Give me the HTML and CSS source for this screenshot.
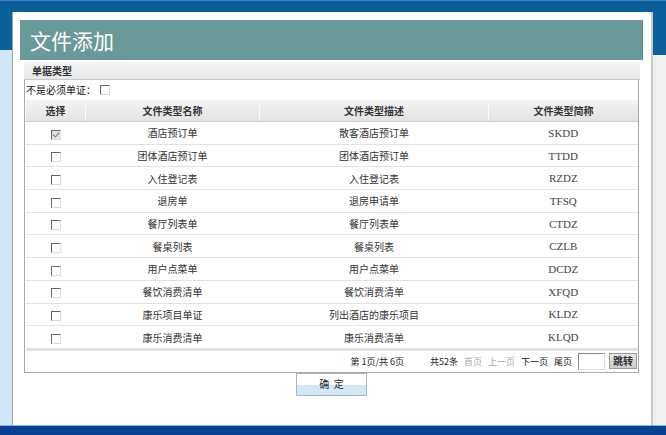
FILE: index.html
```html
<!DOCTYPE html>
<html>
<head>
  <meta charset="utf-8">
  <title>文件添加</title>
  <link rel="stylesheet" href="styles.css">
</head>
<body>

<div class="topbar"></div>

<div class="frame">
  <div class="side-left"></div>

  <div class="panel">
    <div class="title">文件添加</div>
    <div class="section">单据类型</div>

    <div class="box">
      <div class="must">不是必须单证： <span class="chk"></span></div>

      <table class="list">
        <tr class="head">
          <th class="c1">选择</th>
          <th class="c2">文件类型名称</th>
          <th class="c3">文件类型描述</th>
          <th class="c4">文件类型简称</th>
        </tr>
        <tr><td><span class="chk on"></span></td><td>酒店预订单</td><td>散客酒店预订单</td><td class="code">SKDD</td></tr>
        <tr><td><span class="chk"></span></td><td>团体酒店预订单</td><td>团体酒店预订单</td><td class="code">TTDD</td></tr>
        <tr><td><span class="chk"></span></td><td>入住登记表</td><td>入住登记表</td><td class="code">RZDZ</td></tr>
        <tr><td><span class="chk"></span></td><td>退房单</td><td>退房申请单</td><td class="code">TFSQ</td></tr>
        <tr><td><span class="chk"></span></td><td>餐厅列表单</td><td>餐厅列表单</td><td class="code">CTDZ</td></tr>
        <tr><td><span class="chk"></span></td><td>餐桌列表</td><td>餐桌列表</td><td class="code">CZLB</td></tr>
        <tr><td><span class="chk"></span></td><td>用户点菜单</td><td>用户点菜单</td><td class="code">DCDZ</td></tr>
        <tr><td><span class="chk"></span></td><td>餐饮消费清单</td><td>餐饮消费清单</td><td class="code">XFQD</td></tr>
        <tr><td><span class="chk"></span></td><td>康乐项目单证</td><td>列出酒店的康乐项目</td><td class="code">KLDZ</td></tr>
        <tr class="last"><td><span class="chk"></span></td><td>康乐消费清单</td><td>康乐消费清单</td><td class="code">KLQD</td></tr>
      </table>

      <div class="pager">
        <span class="count">第 1页/共 6页</span>
        <span>共52条</span>
        <span class="off">首页</span>
        <span class="off">上一页</span>
        <span>下一页</span>
        <span>尾页</span>
        <span class="goto"></span>
        <span class="jump">跳转</span>
      </div>
    </div>

    <div class="actions">
      <span class="ok">确&nbsp;&nbsp;定</span>
    </div>
  </div>

  <div class="side-right"></div>
</div>

<div class="bottombar"></div>

</body>
</html>
```

FILE: styles.css
```css
body {
  margin: 0;
  width: 666px;
  height: 435px;
  overflow: hidden;
  background-color: #eeeeee;
  font-family: "Noto Sans CJK SC", sans-serif;
  font-size: 10px;
  color: #222;
}

.topbar {
  height: 12px;
  background: linear-gradient(to right, #0a5f98 0%, #0a5f98 100%);
  border-top: 1px solid #3d7fc0;
  box-sizing: border-box;
}

.frame {
  display: flex;
  height: 413px;
}

.side-left {
  width: 12px;
  background: linear-gradient(to bottom, #0c5f98 0px, #0c5f98 38px, #cfe7f6 38px);
  border-right: 1px solid #9aa6b0;
}

.side-right {
  flex: 1;
  background: linear-gradient(to bottom, #0c5f98 0px, #0c5f98 43px, #f0f0f0 43px);
  border-left: 2px solid #c8c8c8;
}

.panel {
  width: 638px;
  background-color: white;
  border-radius: 7px 7px 0 0;
  padding: 8px 0 0 7px;
  box-sizing: border-box;
}

.title {
  width: 623px;
  height: 40px;
  background-color: #6a9999;
  border-right: 1px solid #5d8888;
  box-sizing: border-box;
  color: white;
  font-size: 21px;
  line-height: 40px;
  padding-left: 10px;
}

.section {
  margin: 2px 0 0 4px;
  width: 616px;
  height: 18px;
  background: linear-gradient(to bottom, #f6f6f6, #e6e6e6);
  border-bottom: 1px solid #c9c9c9;
  box-sizing: border-box;
  font-weight: bold;
  color: #333;
  line-height: 18px;
  padding-left: 8px;
}

.box {
  margin-left: 4px;
  width: 615px;
  border: 1px solid #aaaaaa;
  border-top: none;
  box-sizing: border-box;
}

.must {
  height: 20px;
  line-height: 20px;
  padding-left: 1px;
  color: #111;
  display: flex;
  align-items: center;
}

.chk {
  display: inline-block;
  width: 8px;
  height: 8px;
  border-top: 1px solid #666;
  border-left: 1px solid #666;
  border-right: 1px solid #ddd;
  border-bottom: 1px solid #ddd;
  background-color: #fff;
  vertical-align: middle;
}

.must .chk {
  margin-left: 4px;
}

.chk.on {
  background-color: #e4e4e4;
  position: relative;
}

.chk.on::after {
  content: "";
  position: absolute;
  left: 2px;
  top: 0px;
  width: 3px;
  height: 5px;
  border-right: 1px solid #777;
  border-bottom: 1px solid #777;
  transform: rotate(40deg);
}

.list {
  width: 613px;
  border-collapse: collapse;
  table-layout: fixed;
}

.list th {
  height: 21px;
  padding: 0;
  background: linear-gradient(to bottom, #f4f4f4, #e2e2e2);
  border-left: 1px solid #fafafa;
  border-bottom: 1px solid #cfcfcf;
  font-weight: bold;
  color: #333;
  font-size: 10px;
}

.list .c1 { width: 59px; }
.list .c2 { width: 173px; }
.list .c3 { width: 228px; }

.list td {
  height: 21.7px;
  padding: 0;
  text-align: center;
  border-bottom: 1px solid #e2e2e2;
  color: #333;
  font-size: 10px;
}

.list tr.last td {
  border-bottom: 3px solid #e0e0e0;
}

.list td.code {
  font-family: "Liberation Serif", serif;
  font-size: 11px;
  color: #444;
}

.pager {
  height: 21px;
  display: flex;
  justify-content: flex-end;
  align-items: center;
  gap: 6px;
  padding-right: 1px;
  color: #222;
  font-size: 9px;
}

.pager .count {
  margin-right: 20px;
}

.pager .off {
  color: #aaa;
}

.goto {
  width: 25px;
  height: 15px;
  border: 1px solid #888;
  border-right-color: #ddd;
  border-bottom-color: #ddd;
}

.jump {
  background: linear-gradient(to bottom, #e8e8e8, #cccccc);
  border: 1px solid #999;
  padding: 0 3px;
  line-height: 14px;
  font-weight: bold;
  font-size: 10px;
  color: #333;
  margin-left: -2px;
}

.actions {
  padding-left: 276px;
}

.ok {
  display: inline-block;
  width: 71px;
  height: 23px;
  box-sizing: border-box;
  border: 1px solid #a7b5c2;
  background: linear-gradient(to bottom, #ffffff 0%, #ffffff 50%, #d2e8f6 50%, #d2e8f6 100%);
  text-align: center;
  line-height: 19px;
  color: #222;
}

.bottombar {
  height: 10px;
  background-color: #0b3f8f;
  border-top: 1px solid #8fb5d8;
  box-sizing: border-box;
}
```
